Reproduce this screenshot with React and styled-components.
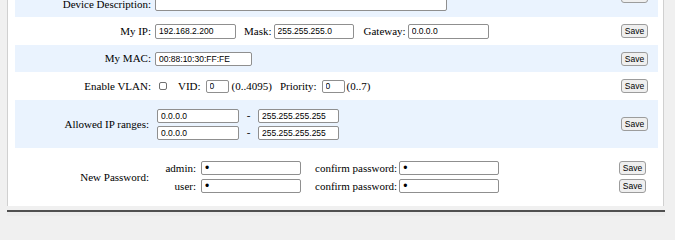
import React from 'react';
import styled, { createGlobalStyle } from 'styled-components';

const Global = createGlobalStyle`
  html, body { margin: 0; padding: 0; background: #f0f0f0; overflow: hidden; }
  body {
    font-family: "Liberation Serif", "Times New Roman", serif;
    font-size: 11px;
    color: #000;
  }
`;

const Panel = styled.div`
  box-sizing: border-box;
  margin: -25px 0 0 7px;
  width: 657px;
  border-left: 1px solid #d0d0d0;
  border-right: 1px solid #d0d0d0;
  background: #fff;
  padding: 0 5px 0 7px;
`;

const Row = styled.div`
  display: grid;
  grid-template-columns: 140px 1fr auto;
  align-items: center;
  height: ${(p) => p.$h}px;
  background: ${(p) => (p.$shade ? '#eaf3fe' : '#fff')};
`;

const Label = styled.div`
  text-align: right;
  line-height: 13px;
  white-space: nowrap;
  padding-right: ${(p) => (p.$pr ?? 4)}px;
  padding-bottom: ${(p) => p.$pb || 0}px;
  align-self: ${(p) => (p.$end ? 'end' : 'center')};
`;

const Cell = styled.div`
  display: flex;
  align-items: center;
  padding-left: ${(p) => p.$pl || 0}px;
`;

const Stack = styled.div`
  display: flex;
  flex-direction: column;
  gap: ${(p) => p.$gap || 4}px;
`;

const Line = styled.div`
  display: flex;
  align-items: center;
`;

const SaveCell = styled.div`
  display: flex;
  flex-direction: column;
  gap: 4px;
  padding-right: ${(p) => (p.$pr ?? 10)}px;
`;

const Button = styled.button`
  box-sizing: border-box;
  width: 27px;
  height: 14px;
  padding: 0;
  margin: 0;
  font: 8.5px "Liberation Sans", Arial, sans-serif;
  line-height: 12px;
  color: #000;
  background: #efefef;
  border: 1px solid #9c9c9c;
  border-radius: 3px;
`;

const Field = styled.input`
  box-sizing: border-box;
  width: ${(p) => p.$w}px;
  height: ${(p) => p.$h || 14}px;
  margin: 0;
  padding: 0 0 0 3px;
  border: 1px solid #8f8f8f;
  border-radius: 2px;
  background: #fff;
  color: #000;
  font: ${(p) => (p.$big ? 12 : 8.5)}px "Liberation Sans", Arial, sans-serif;
  outline: none;
`;

const Area = styled.textarea`
  box-sizing: border-box;
  width: 292px;
  height: 30px;
  margin: 0;
  padding: 0 3px;
  border: 1px solid #8f8f8f;
  border-radius: 2px;
  background: #fff;
  resize: none;
  font: 8.5px "Liberation Sans", Arial, sans-serif;
  outline: none;
`;

const Check = styled.input`
  appearance: none;
  box-sizing: border-box;
  width: 8px;
  height: 8px;
  margin: 0 0 0 4px;
  border: 1px solid #707070;
  border-radius: 2px;
  background: #fff;
`;

const Text = styled.span`
  line-height: 13px;
  white-space: nowrap;
  margin-left: ${(p) => p.$ml || 0}px;
  margin-right: ${(p) => p.$mr || 0}px;
`;

const Dash = styled.span`
  width: 19px;
  text-align: center;
  line-height: 13px;
`;

const SubLabel = styled.span`
  width: 41px;
  text-align: right;
  line-height: 13px;
  margin-right: 5px;
`;

const Footer = styled.div`
  box-sizing: border-box;
  margin: 4px 0 0 7px;
  width: 658px;
  height: 6px;
  border-top: 2px solid #505050;
  background: #ececec;
`;

const noop = () => {};

export default function App() {
  return (
    <>
      <Global />
      <Panel>
        <Row $h={42} $shade>
          <Label $end $pb={6}>Device Description:</Label>
          <Cell>
            <Area value="" onChange={noop} />
          </Cell>
          <SaveCell>
            <Button>Save</Button>
          </SaveCell>
        </Row>

        <Row $h={28}>
          <Label>My IP:</Label>
          <Cell>
            <Field $w={81} $h={15} value="192.168.2.200" onChange={noop} />
            <Text $ml={8} $mr={2}>Mask:</Text>
            <Field $w={80} $h={15} value="255.255.255.0" onChange={noop} />
            <Text $ml={10} $mr={2}>Gateway:</Text>
            <Field $w={81} $h={15} value="0.0.0.0" onChange={noop} />
          </Cell>
          <SaveCell>
            <Button>Save</Button>
          </SaveCell>
        </Row>

        <Row $h={27} $shade>
          <Label>My MAC:</Label>
          <Cell>
            <Field $w={97} value="00:88:10:30:FF:FE" onChange={noop} />
          </Cell>
          <SaveCell>
            <Button>Save</Button>
          </SaveCell>
        </Row>

        <Row $h={28}>
          <Label>Enable VLAN:</Label>
          <Cell>
            <Check type="checkbox" />
            <Text $ml={11} $mr={5}>VID:</Text>
            <Field $w={23} $h={13} value="0" onChange={noop} />
            <Text $ml={3}>(0..4095)</Text>
            <Text $ml={8} $mr={5}>Priority:</Text>
            <Field $w={23} $h={13} value="0" onChange={noop} />
            <Text $ml={2}>(0..7)</Text>
          </Cell>
          <SaveCell>
            <Button>Save</Button>
          </SaveCell>
        </Row>

        <Row $h={48} $shade>
          <Label $pr={6}>Allowed IP ranges:</Label>
          <Cell $pl={2}>
            <Stack $gap={3}>
              <Line>
                <Field $w={82} value="0.0.0.0" onChange={noop} />
                <Dash>-</Dash>
                <Field $w={81} value="255.255.255.255" onChange={noop} />
              </Line>
              <Line>
                <Field $w={82} value="0.0.0.0" onChange={noop} />
                <Dash>-</Dash>
                <Field $w={81} value="255.255.255.255" onChange={noop} />
              </Line>
            </Stack>
          </Cell>
          <SaveCell>
            <Button>Save</Button>
          </SaveCell>
        </Row>

        <Row $h={58}>
          <Label $pr={6}>New Password:</Label>
          <Cell>
            <Stack $gap={4}>
              <Line>
                <SubLabel>admin:</SubLabel>
                <Field $w={100} $big type="password" value="x" onChange={noop} />
                <Text $ml={14} $mr={2}>confirm password:</Text>
                <Field $w={100} $big type="password" value="x" onChange={noop} />
              </Line>
              <Line>
                <SubLabel>user:</SubLabel>
                <Field $w={100} $big type="password" value="x" onChange={noop} />
                <Text $ml={14} $mr={2}>confirm password:</Text>
                <Field $w={100} $big type="password" value="x" onChange={noop} />
              </Line>
            </Stack>
          </Cell>
          <SaveCell $pr={12}>
            <Button>Save</Button>
            <Button>Save</Button>
          </SaveCell>
        </Row>
      </Panel>
      <Footer />
    </>
  );
}
